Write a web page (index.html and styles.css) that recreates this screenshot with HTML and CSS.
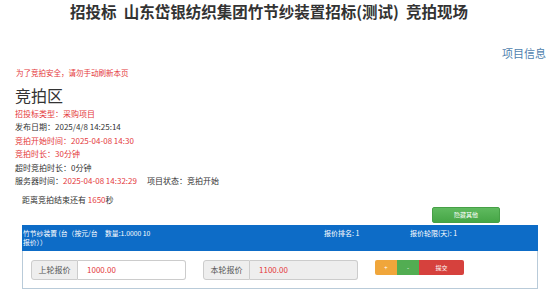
FILE: index.html
```html
<!DOCTYPE html>
<html lang="zh-CN">
<head>
<meta charset="utf-8">
<title>竞拍现场</title>
<link rel="stylesheet" href="styles.css">
</head>
<body>
<h1 class="title">招投标&nbsp;&nbsp;山东岱银纺织集团竹节纱装置招标(测试)&nbsp;&nbsp;竞拍现场</h1>
<div class="proj-info">项目信息</div>
<div class="warn">为了竞拍安全，请勿手动刷新本页</div>
<div class="area">
  <h2 class="area-title">竞拍区</h2>
  <div class="info">
    <div class="line red">招投标类型：采购项目</div>
    <div class="line">发布日期：2025/4/8 14:25:14</div>
    <div class="line red">竞拍开始时间：2025-04-08 14:30</div>
    <div class="line red">竞拍时长：30分钟</div>
    <div class="line">超时竞拍时长：0分钟</div>
    <div class="line">服务器时间：<span class="red">2025-04-08 14:32:29</span><span class="status">项目状态：竞拍开始</span></div>
  </div>
  <div class="countdown">距离竞拍结束还有 <span class="red">1650</span>秒</div>
</div>
<div class="toolbar"><button class="btn-hide">隐藏其他</button></div>
<div class="panel">
  <div class="panel-head">
    <div class="col-name">竹节纱装置 (台（按元/台&nbsp;&nbsp;&nbsp;&nbsp; 数量:1.0000 10 报价））</div>
    <div></div>
    <div>报价排名: 1</div>
    <div>报价轮限(天): 1</div>
  </div>
  <div class="panel-body">
    <div class="igroup">
      <span class="addon">上轮报价</span>
      <span class="field">1000.00</span>
    </div>
    <div class="igroup">
      <span class="addon">本轮报价</span>
      <span class="field readonly">1100.00</span>
    </div>
    <div class="btns">
      <button class="b b-plus">+</button>
      <button class="b b-minus">-</button>
      <button class="b b-submit">提交</button>
    </div>
  </div>
</div>
</body>
</html>
```
FILE: styles.css
```css
* { box-sizing: border-box; }
body {
  margin: 0;
  font-family: "Noto Sans CJK SC", "Liberation Sans", sans-serif;
  color: #333;
  background: #fff;
  width: 554px;
  height: 304px;
  overflow: hidden;
}
.title {
  margin: 0;
  font-size: 15.5px;
  line-height: 22px;
  font-weight: bold;
  text-align: center;
  color: #333;
  padding-right: 16px;
}
.proj-info {
  margin-top: 23px;
  text-align: right;
  padding-right: 8px;
  font-size: 11px;
  line-height: 16px;
  color: #4f7fae;
}
.warn {
  margin-top: 6.5px;
  padding-left: 16px;
  font-size: 7.5px;
  line-height: 10px;
  color: #e4393c;
}
.area { padding-left: 15px; }
.area-title {
  margin: 7.5px 0 0;
  font-size: 16px;
  font-weight: normal;
  line-height: 20px;
  color: #333;
}
.info { margin-top: 1.7px; font-size: 8px; line-height: 13.5px; }
.red { color: #e4393c; }
.status { margin-left: 10px; color: #333; }
.countdown {
  margin-top: 6.3px;
  padding-left: 7px;
  font-size: 8px;
  line-height: 12px;
}
.toolbar {
  display: flex;
  justify-content: flex-end;
  padding-right: 54px;
  margin-top: 1px;
}
.btn-hide {
  width: 68px;
  height: 16px;
  border: 1px solid #46a046;
  border-radius: 2px;
  background: linear-gradient(#5fba5f, #46a646);
  color: #fff;
  font-family: inherit;
  font-size: 6px;
  padding: 0;
}
.panel {
  margin: 2px 16px 0 22px;
}
.panel-head {
  background: #0d6cc7;
  color: #fff;
  display: grid;
  grid-template-columns: 137px 164px 86px 1fr;
  padding: 4px 0 4px 1px;
  height: 26px;
  font-size: 7px;
  line-height: 9px;
}
.col-name { font-size: 6.8px; max-width: 130px; }
.panel-body {
  border: 1px solid #b9cbd9;
  border-top: none;
  padding: 9px 8px 8px;
  display: flex;
  align-items: flex-start;
  gap: 17px;
}
.igroup {
  display: flex;
  width: 155px;
  height: 20px;
}
.addon {
  width: 47px;
  flex: none;
  background: #eee;
  border: 1px solid #ccc;
  border-radius: 3px 0 0 3px;
  font-size: 8px;
  color: #555;
  display: flex;
  align-items: center;
  justify-content: center;
}
.field {
  flex: 1;
  border: 1px solid #ccc;
  border-left: none;
  border-radius: 0 3px 3px 0;
  padding-left: 9px;
  font-size: 8px;
  color: #e4393c;
  display: flex;
  align-items: center;
  background: #fff;
}
.field.readonly { background: #eee; }
.btns { display: flex; }
.b {
  height: 15px;
  border: none;
  padding: 0;
  color: #fff;
  font-family: inherit;
  font-size: 6px;
}
.b-plus { width: 22px; background: #f0a63b; border-radius: 2px 0 0 2px; }
.b-minus { width: 22px; background: #52ad52; }
.b-submit { width: 45px; background: #d6413d; border-radius: 0 2px 2px 0; }
```
